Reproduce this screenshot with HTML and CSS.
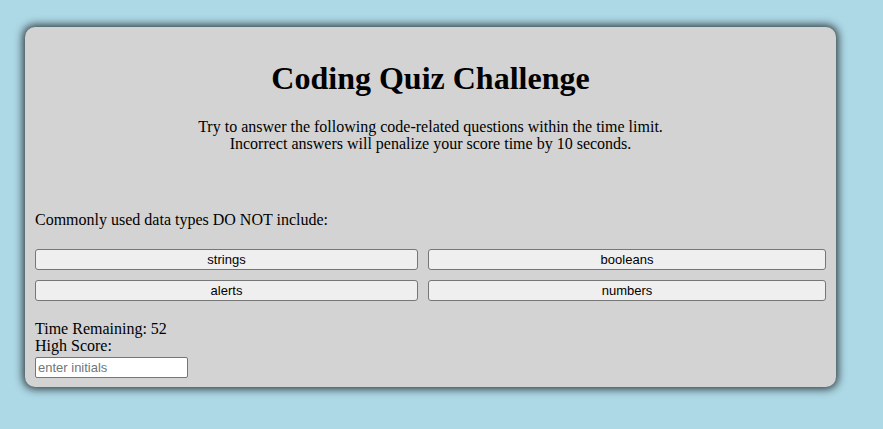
FILE: index.html
```html
<!DOCTYPE html>
<html lang="en">
<head>
<meta charset="utf-8">
<title>Coding Quiz Challenge</title>
<link rel="stylesheet" href="styles.css">
</head>
<body>
<main class="card">
  <header class="intro">
    <h1 class="title">Coding Quiz Challenge</h1>
    <p class="lead">Try to answer the following code-related questions within the time limit.<br>Incorrect answers will penalize your score time by 10 seconds.</p>
  </header>
  <section class="quiz">
    <p class="question">Commonly used data types DO NOT include:</p>
    <div class="answers">
      <button class="answer">strings</button>
      <button class="answer">booleans</button>
      <button class="answer">alerts</button>
      <button class="answer">numbers</button>
    </div>
  </section>
  <section class="status">
    <div class="line">Time Remaining: 52</div>
    <div class="line">High Score:</div>
    <input class="initials" type="text" placeholder="enter initials">
  </section>
</main>
</body>
</html>
```
FILE: styles.css
```css
html, body {
  margin: 0;
  padding: 0;
}
body {
  background: #add8e6;
  font-family: "Liberation Serif", "Times New Roman", serif;
  font-size: 16px;
  line-height: 17px;
  color: #000;
  min-height: 429px;
}
.card {
  box-sizing: border-box;
  width: 811px;
  margin: 27px 0 0 25px;
  padding: 33px 10px 9px;
  background: #d3d3d3;
  border-radius: 10px;
  box-shadow: 0 0 8px 2px rgba(0, 0, 0, 0.75);
}
.intro {
  text-align: center;
}
.title {
  margin: 0;
  font-size: 32px;
  line-height: 37px;
  font-weight: bold;
}
.lead {
  margin: 21px 0 0;
}
.question {
  margin: 59px 0 0;
}
.answers {
  display: grid;
  grid-template-columns: 383fr 398fr;
  column-gap: 10px;
  row-gap: 10px;
  margin-top: 21px;
}
.answer {
  height: 21px;
  padding: 0;
  font-family: "Liberation Sans", Arial, sans-serif;
  font-size: 13px;
  color: #000;
  background: #efefef;
  border: 1px solid #767676;
  border-radius: 3px;
}
.status {
  margin-top: 19px;
}
.initials {
  box-sizing: border-box;
  width: 153px;
  height: 21px;
  margin: 3px 0 0;
  padding: 1px 2px;
  font-family: "Liberation Sans", Arial, sans-serif;
  font-size: 13px;
  border: 1px solid #767676;
  border-radius: 2px;
  background: #fff;
  display: block;
}
.initials::placeholder {
  color: #757575;
}
```
